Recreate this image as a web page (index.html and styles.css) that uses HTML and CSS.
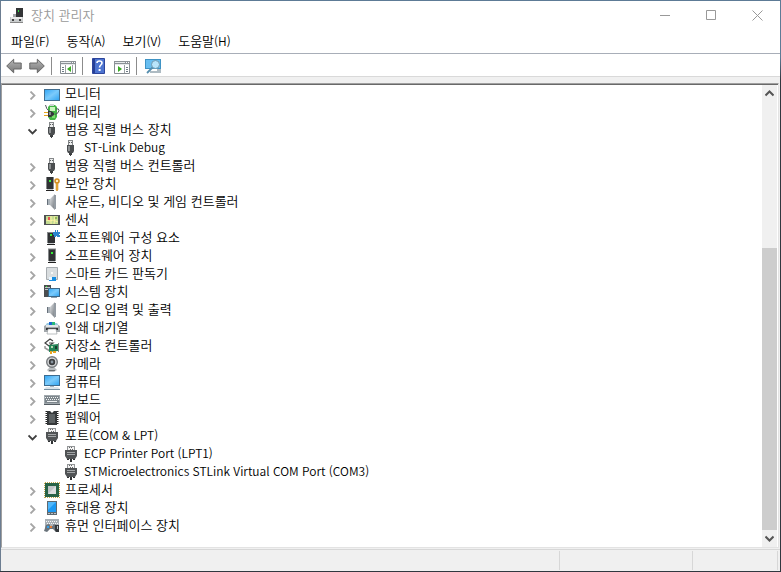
FILE: index.html
```html
<!DOCTYPE html>
<html lang="ko">
<head>
    <meta charset="UTF-8">
    <meta name="viewport" content="width=device-width, initial-scale=1.0">
    <title>장치 관리자</title>
    <link rel="stylesheet" href="styles.css">
</head>
<body>
    <!-- device icons, all on a 16x16 grid -->
    <svg class="sprite" aria-hidden="true">
        <defs>
            <linearGradient id="screen" x1="0" y1="0" x2="1" y2="1">
                <stop offset="0" stop-color="#35a8f5"/>
                <stop offset=".5" stop-color="#7ccbfb"/>
                <stop offset="1" stop-color="#33a6f2"/>
            </linearGradient>
            <linearGradient id="metal" x1="0" y1="0" x2="1" y2="1">
                <stop offset="0" stop-color="#e4e6e8"/>
                <stop offset="1" stop-color="#6c7278"/>
            </linearGradient>
            <linearGradient id="arrow" x1="0" y1="0" x2="0" y2="1">
                <stop offset="0" stop-color="#b5b5b5"/>
                <stop offset="1" stop-color="#777"/>
            </linearGradient>
        </defs>
        <symbol id="chevron" viewBox="0 0 9 9">
            <path d="M2.5 .5l4 4-4 4" fill="none" stroke="currentColor" stroke-width="1.8"/>
        </symbol>
        <symbol id="tower" viewBox="0 0 16 16">
            <path d="M4 1h8v12H4z" fill="#303234"/>
            <path d="M4 1h8M4.500 1v12M11.500 1v12" stroke="#85888a" fill="none"/>
            <path d="M7 4h2v2H7z" fill="#35ee35"/>
            <path d="M4 14h8v1H4z" fill="#222"/>
            <path d="M5 13h6v1H5z" fill="#c5c8ca"/>
        </symbol>
        <symbol id="monitor" viewBox="0 0 16 16">
            <path d="M0 3h16v12H0z" fill="#426e8f"/>
            <path d="M1 4h14v10H1z" fill="url(#screen)"/>
        </symbol>
        <symbol id="battery" viewBox="0 0 16 16">
            <path d="M6 1h5l2 2v10l-2 3H6l-2-3V3z" fill="#43b544"/>
            <path d="M6 3h5v4H6z" fill="#c9f5bd"/>
            <path d="M8 11h3v3H8z" fill="#7bdc6c"/>
            <path d="M6 0h4v2H6z" fill="#d0d3d5"/>
            <path d="M6 8Q2 5 1.500 1M12 5q3-1 3 1.500t-4 4" fill="none" stroke="#50565a"/>
            <path d="M0 8h5v1H0zM0 11h5v1H0z" fill="#e5a51d"/>
            <path d="M4 7h3l3 2v2l-3 2H4z" fill="#34383a"/>
            <path d="M5 8h2v3H5z" fill="#858b8e"/>
        </symbol>
        <symbol id="usb" viewBox="0 0 16 16">
            <path d="M5 0h5v5H5z" fill="#85888a"/>
            <path d="M6 1h3v4H6z" fill="#eceded"/>
            <path d="M6 2h1v1H6zM8 2h1v1H8z" fill="#5c6062"/>
            <path d="M4 5h7v6l-1 2H5l-1-2z" fill="#4b4e50"/>
            <path d="M5 6h2v5H5z" fill="#8b8e90"/>
            <path d="M6 13h3v2H6zM7 15h1v1H7z" fill="#3d4042"/>
        </symbol>
        <symbol id="security" viewBox="0 0 16 16">
            <path d="M2 1h8v12H2z" fill="#303234"/>
            <path d="M2.500 1v12M9.500 1v12" stroke="#85888a"/>
            <path d="M5 4h2v2H5z" fill="#35ee35"/>
            <path d="M3 13h6v1H3z" fill="#c5c8ca"/>
            <path d="M2 14h8v1H2z" fill="#222"/>
            <circle cx="13" cy="5" r="2" fill="#fff0c4" stroke="#d28b1d" stroke-width="1.600"/>
            <path d="M12 7h2v7l-1 1-1-1z" fill="#edb13c" stroke="#c27d16" stroke-width=".5"/>
        </symbol>
        <symbol id="speaker" viewBox="0 0 16 16">
            <path d="M3 5h4v6H3z" fill="#66707a"/>
            <path d="M6 5l5-5v16l-5-5z" fill="url(#metal)"/>
            <path d="M4 5h2v6H4z" fill="#aab2b9"/>
            <path d="M10 1h2v14h-2z" fill="#959ca3"/>
        </symbol>
        <symbol id="sensor" viewBox="0 0 16 16">
            <path d="M0 3h16v10H0z" fill="#4e5153"/>
            <path d="M2 4h12v8H2z" fill="#c3dc92"/>
            <path d="M2 8l4 1 3-1 5 2M7 4v8M11 4l-1 8" fill="none" stroke="#fff1a3"/>
            <path d="M4 5h2v3H4z" fill="#e65350"/>
            <path d="M11 5h2v2h-2z" fill="#8eb656"/>
        </symbol>
        <symbol id="component" viewBox="0 0 16 16">
            <path d="M3 2h8v11H3z" fill="#303234"/>
            <path d="M3 2.500h7M3.500 2v11" stroke="#85888a"/>
            <path d="M6 4h2v2H6z" fill="#35ee35"/>
            <path d="M3 14h8v1H3z" fill="#222"/>
            <path d="M4 13h6v1H4z" fill="#c5c8ca"/>
            <path d="M9 2h2V0h1v2h1V0h1v2h2v2h-1v1h1v2h-3V6h-1v1h-2V5H9z" fill="#2985ce"/>
        </symbol>
        <symbol id="smartcard" viewBox="0 0 16 16">
            <path d="M2.500 1.500h11v12h-11z" fill="#d9dddf" stroke="#a7acb0"/>
            <path d="M7 6h2v2H7z" fill="#f8f8f8"/>
            <path d="M5 11h7v4H5z" fill="#168de2"/>
            <path d="M5 11h3v3H5z" fill="#e9f5ff"/>
        </symbol>
        <symbol id="system" viewBox="0 0 16 16">
            <path d="M0 1h7v12H0z" fill="#4b4e50"/>
            <path d="M1 3.500h5M1 5.500h3" stroke="#bfc4c7"/>
            <path d="M2 2h1v1H2z" fill="#3e3"/>
            <path d="M4 4h12v9H4z" fill="#3c6888"/>
            <path d="M5 5h10v7H5z" fill="url(#screen)"/>
            <path d="M7 13h6v1H7z" fill="#8ea1ad"/>
        </symbol>
        <symbol id="printer" viewBox="0 0 16 16">
            <path d="M3 3h10l2 3H1z" fill="#9ccbe0"/>
            <path d="M5 2h3v3H5z" fill="#1b65d0"/>
            <path d="M8 2h3v3H8z" fill="#27b878"/>
            <path d="M0 6l2-1h12l2 1v6H0z" fill="#a2a7ab"/>
            <path d="M2 5h12v2H2z" fill="#e1e4e6"/>
            <path d="M2 8h12v2H2z" fill="#303234"/>
            <path d="M4 9h8l1 5H3z" fill="#fff" stroke="#8d9397" stroke-width=".6"/>
        </symbol>
        <symbol id="storage" viewBox="0 0 16 16">
            <path d="M9 3L6 1 1 5l4 3 4-3H5" fill="none" stroke="#444" stroke-width="1.200"/>
            <path d="M1 8v2l5 3" fill="none" stroke="#999" stroke-width="1.500"/>
            <path d="M5 7l9-1v7l-9 1z" fill="#258457"/>
            <path d="M7 8h2v2H7z" fill="#b5d8b1"/>
            <path d="M11 8h2v3h-2z" fill="#163d2c"/>
            <path d="M6 13h2v3H6zM9 13h3v2H9z" fill="#e9a621"/>
            <path d="M14.500 5v9" stroke="#888"/>
        </symbol>
        <symbol id="camera" viewBox="0 0 16 16">
            <path d="M3 14l3-3h4l3 3-3 2H5z" fill="#b9bdc0"/>
            <circle cx="8" cy="6" r="5.300" fill="#d6d8da" stroke="#777b7e" stroke-width="1.400"/>
            <circle cx="8" cy="6" r="3.200" fill="#3b3d3f"/>
            <circle cx="8" cy="6" r="1.400" fill="#8996a1"/>
            <path d="M5 14h6v1H5z" fill="#696d70"/>
        </symbol>
        <symbol id="computer" viewBox="0 0 16 16">
            <path d="M0 1h16v11H0z" fill="#3c6c91"/>
            <path d="M1 2h14v9H1z" fill="url(#screen)"/>
            <path d="M6 12h4v1H6z" fill="#acb6bd"/>
            <path d="M2 13h12l2 2H0z" fill="#dbe5eb"/>
            <path d="M0 15.500h16" stroke="#7892a3"/>
        </symbol>
        <symbol id="keyboard" viewBox="0 0 16 16">
            <path d="M0 3h16v10H0z" fill="#a0a8ad"/>
            <path d="M1 4h14v7H1z" fill="#7d868c"/>
            <path d="M1 5.500h14M2 7.500h13" stroke="#f1f4f5" stroke-dasharray="1 1"/>
            <path d="M3 9.500h10" stroke="#eef1f2"/>
            <path d="M0 12h16v1H0z" fill="#555d63"/>
        </symbol>
        <symbol id="firmware" viewBox="0 0 16 16">
            <path d="M2.500 1v14M13.500 1v14" stroke="#222" stroke-width="2" stroke-dasharray="1 1"/>
            <path d="M3 1h3l2 2 2-2h3v14H3z" fill="#35383a"/>
            <path d="M5 4h6v9H5z" fill="#5c6163"/>
        </symbol>
        <symbol id="port" viewBox="0 0 16 16">
            <path d="M4 0h8v5H4z" fill="#929597"/>
            <path d="M5 1h6v4H5z" fill="#f3f3f3"/>
            <path d="M6 1h1v1H6zM8 1h1v1H8zM7 3h1v1H7zM9 3h1v1H9z" fill="#666"/>
            <path d="M2 4h12v6l-2 3H4l-2-3z" fill="#505355"/>
            <path d="M4 6.500h8M4 8.500h8" stroke="#a2a5a7"/>
            <path d="M4 13h2v1H4zM10 13h2v1h-2zM7 13h2v3H7z" fill="#303234"/>
        </symbol>
        <symbol id="processor" viewBox="0 0 16 16">
            <path d="M1 .5h15M1 15.500h15M.5 1v15M15.500 1v15" stroke="#c5a54d" stroke-dasharray="1 1"/>
            <path d="M1 1h14v14H1z" fill="#286347"/>
            <path d="M4 4h8v8H4z" fill="#c1c5c7"/>
            <path d="M4 12l8-8v8z" fill="#dddfe0"/>
        </symbol>
        <symbol id="portable" viewBox="0 0 16 16">
            <path d="M3 1h10v14H3z" fill="#5d6971"/>
            <path d="M4 2h8v10H4z" fill="#1c99f3"/>
            <path d="M4 2h8l-8 8z" fill="#51b7fa"/>
            <path d="M4 13h2v1H4zM7 13h2v1H7zM10 13h2v1h-2z" fill="#bac1c5"/>
        </symbol>
        <symbol id="hid" viewBox="0 0 16 16">
            <path d="M1 1h14v9H1z" fill="#aab1b6"/>
            <path d="M2 3.500h12M3 5.500h11M2 7.500h12" stroke="#f6f7f8" stroke-dasharray="1 1"/>
            <path d="M2 7l3-1 2 2h1l2-2 2 1 2 6-2 1-3-3H6l-3 3-3-1z" fill="#69737b"/>
            <path d="M3 8h2v2H3z" fill="#36a0e8"/>
            <path d="M6 8h2v2H6z" fill="#e27b37"/>
            <path d="M11 7h4v7h-3l-1-2z" fill="#34383b"/>
            <path d="M13 8h1v3h-1z" fill="#b8bec2"/>
        </symbol>
        <symbol id="devmgr" viewBox="0 0 16 16">
            <path d="M7 0h7v10H7z" fill="#333537"/>
            <path d="M9 2h1v2H9z" fill="#30df40"/>
            <path d="M4 6h3v3H4z" fill="#a5a8aa"/>
            <path d="M1 9h13v6H1z" fill="#c9cccd"/>
            <path d="M2 9h11v2H2z" fill="#ececec"/>
            <path d="M3 11h2v2H3zM10 11h2v2h-2z" fill="#444"/>
            <path d="M1 14h13v1H1z" fill="#888"/>
        </symbol>
        <symbol id="arrow-left" viewBox="0 0 16 16">
            <path d="M.7 8l7-6.800V5h7.500v6H7.700v3.800z" fill="url(#arrow)" stroke="#666"/>
        </symbol>
        <symbol id="arrow-right" viewBox="0 0 16 16">
            <path d="M15.300 8l-7-6.800V5H.8v6h7.500v3.800z" fill="url(#arrow)" stroke="#666"/>
        </symbol>
        <symbol id="pane-left" viewBox="0 0 16 16">
            <path d="M.5 3.500h15v12H.5z" fill="#fff" stroke="#858b90"/>
            <path d="M0 3h16v4H0z" fill="#8c9297"/>
            <path d="M1 4.500h10M1 6.500h14" stroke="#e5e8ea"/>
            <path d="M12 4h1v1h-1zM14 4h1v1h-1z" fill="#fff"/>
            <path d="M5.500 7v8M12.500 7v8" stroke="#9ba1a5"/>
            <path d="M2 9.500h2M2 11.500h2M2 13.500h2" stroke="#6d7b85"/>
            <path d="M11 8v6l-4-3z" fill="#3aac25"/>
        </symbol>
        <symbol id="pane-right" viewBox="0 0 16 16">
            <path d="M.5 3.500h15v12H.5z" fill="#fff" stroke="#858b90"/>
            <path d="M0 3h16v4H0z" fill="#8c9297"/>
            <path d="M1 4.500h10M1 6.500h14" stroke="#e5e8ea"/>
            <path d="M12 4h1v1h-1zM14 4h1v1h-1z" fill="#fff"/>
            <path d="M10.500 7v8" stroke="#9ba1a5"/>
            <path d="M12 9.500h2M12 11.500h2M12 13.500h2" stroke="#6d7b85"/>
            <path d="M4 8v6l4-3z" fill="#3aac25"/>
        </symbol>
        <symbol id="help" viewBox="0 0 16 16">
            <path d="M1.500 .5h12v15h-12z" fill="#4d74d0" stroke="#2d459c"/>
            <path d="M2 1h2v14H2z" fill="#263f96"/>
            <path d="M6 5q0-2 2.500-2T11 5q0 1-1.200 2T8.500 9.500" fill="none" stroke="#fff" stroke-width="1.600"/>
            <path d="M7.600 11h2v2h-2z" fill="#fff"/>
        </symbol>
        <symbol id="scan" viewBox="0 0 16 16">
            <path d="M0 1h16v10H0z" fill="#3f93c5"/>
            <path d="M1 2h14v8H1z" fill="#68bef1"/>
            <path d="M5 13h11v2H5zM12 11h4v2h-4z" fill="#aebbc3"/>
            <circle cx="10.500" cy="6.500" r="4" fill="#b8e4fb" stroke="#6e98b0"/>
            <path d="M7.500 9.500L2 15" stroke="#568eae" stroke-width="1.800"/>
        </symbol>
    </svg>

    <main class="window">
        <header class="title-bar">
            <svg class="icon"><use href="#devmgr"/></svg>
            <h1>장치 관리자</h1>
            <div class="window-controls">
                <button type="button" aria-label="최소화"><svg viewBox="0 0 11 11"><path d="M0 5.500h10"/></svg></button>
                <button type="button" aria-label="최대화"><svg viewBox="0 0 11 11"><path d="M.5 .5h9v9h-9z"/></svg></button>
                <button type="button" aria-label="닫기"><svg viewBox="0 0 11 11"><path d="M.5 .5l10 10M10.500 .5l-10 10"/></svg></button>
            </div>
        </header>

        <nav class="menu-bar">
            <button type="button">파일<span class="latin">(F)</span></button>
            <button type="button">동작<span class="latin">(A)</span></button>
            <button type="button">보기<span class="latin">(V)</span></button>
            <button type="button">도움말<span class="latin">(H)</span></button>
        </nav>

        <div class="toolbar">
            <button type="button" aria-label="뒤로"><svg class="icon"><use href="#arrow-left"/></svg></button>
            <button type="button" aria-label="앞으로"><svg class="icon"><use href="#arrow-right"/></svg></button>
            <span class="separator"></span>
            <button type="button" aria-label="콘솔 트리 표시"><svg class="icon"><use href="#pane-left"/></svg></button>
            <span class="separator"></span>
            <button type="button" aria-label="도움말"><svg class="icon"><use href="#help"/></svg></button>
            <button type="button" aria-label="작업 창 표시"><svg class="icon"><use href="#pane-right"/></svg></button>
            <span class="separator"></span>
            <button type="button" aria-label="하드웨어 변경 사항 검색"><svg class="icon"><use href="#scan"/></svg></button>
        </div>

        <section class="panel">
            <ul class="tree" id="device-tree"></ul>
            <div class="scrollbar">
                <button type="button" aria-label="위로 스크롤"><svg viewBox="0 0 9 9"><path d="M.5 6.500l4-4 4 4"/></svg></button>
                <div class="track"><div class="thumb"></div></div>
                <button type="button" aria-label="아래로 스크롤"><svg viewBox="0 0 9 9"><path d="M.5 2.500l4 4 4-4"/></svg></button>
            </div>
        </section>

        <footer class="status-bar">
            <span class="status-main"></span>
            <span class="status-middle"></span>
            <span class="status-end"></span>
        </footer>
    </main>

    <script src="script.js"></script>
</body>
</html>
```

FILE: styles.css
```css
* {
    box-sizing: border-box;
}

body {
    margin: 0;
    height: 100vh;
    padding: 1px;
    background: linear-gradient(#5d7b96 10%, #30373f 14%);
    font-family: "Noto Sans CJK KR", "Noto Sans", sans-serif;
    font-size: 13px;
    font-weight: 350;
    line-height: 18px;
    color: #000;
}

button {
    display: flex;
    align-items: center;
    justify-content: center;
    padding: 0;
    border: 0;
    background: none;
    color: inherit;
    font: inherit;
}

.latin {
    font-size: 12px;
}

.sprite {
    position: absolute;
    width: 0;
    height: 0;
}

.icon {
    display: block;
    flex: none;
    width: 16px;
    height: 16px;
}

.window {
    display: flex;
    flex-direction: column;
    height: 100%;
    background: #f0f0f0;
    box-shadow: -1px 0 #6c7d91;
}

.title-bar {
    display: flex;
    align-items: center;
    height: 29px;
    padding-left: 8px;
    background: #fff;
    color: #999;
}

.title-bar h1 {
    flex: 1;
    margin: 0;
    padding: 0 0 2px 6px;
    font-size: 13px;
    font-weight: inherit;
}

.window-controls {
    display: flex;
    height: 100%;
}

.window-controls button {
    width: 46px;
}

.window-controls svg {
    width: 11px;
    height: 11px;
    fill: none;
    stroke: #999;
}

.menu-bar {
    display: flex;
    gap: 17px;
    height: 24px;
    padding: 0 0 2px 10px;
    border-bottom: 1px solid #a8aeb8;
    background: #fff;
}

.toolbar {
    display: flex;
    align-items: center;
    gap: 7px;
    height: 23px;
    padding: 2px 0 0 5px;
    border-bottom: 1px solid #d9d9d9;
    background: #fff;
}

.separator {
    width: 1px;
    height: 18px;
    margin: 0 1px 0 -1px;
    background: #8c8c8c;
}

.panel {
    display: flex;
    flex: 1;
    min-height: 0;
    margin: 6px 1px 0 0;
    border: 1px solid #e3e3e3;
    border-top-color: #a0a0a0;
    border-left-color: #a0a0a0;
    background: #fff;
    box-shadow: inset 0 1px #696969;
}

.tree {
    flex: 1;
    margin: 0;
    padding: 1px 0 0 26px;
    overflow: hidden;
    list-style: none;
}

.tree ul {
    margin: 0;
    padding-left: 19px;
    list-style: none;
}

.row {
    display: flex;
    align-items: center;
    height: 18px;
    white-space: nowrap;
}

.toggle {
    width: 9px;
    height: 18px;
    margin-right: 7px;
    padding-top: 3px;
    color: #a6a6a6;
}

.toggle svg {
    width: 9px;
    height: 9px;
}

.toggle.open {
    color: #404040;
}

.toggle.open svg {
    transform: rotate(90deg);
}

.tree ul .row {
    padding-left: 16px;
}

.label {
    padding: 0 0 2px 5px;
}

.scrollbar {
    display: flex;
    flex-direction: column;
    width: 16px;
    margin: 1px 0 0;
    border-right: 1px solid #fff;
    background: #f0f0f0;
}

.scrollbar button {
    height: 17px;
}

.scrollbar svg {
    width: 9px;
    height: 9px;
    fill: none;
    stroke: #555;
    stroke-width: 2;
}

.track {
    display: flex;
    flex: 1;
    flex-direction: column;
    justify-content: flex-end;
}

.thumb {
    height: 66%;
    background: #cdcdcd;
}

.status-bar {
    display: flex;
    height: 22px;
    margin-top: 1px;
    padding: 1px 2px 1px 0;
    border-top: 1px solid #d7d7d7;
}

.status-bar span {
    border-right: 1px solid #d7d7d7;
}

.status-main {
    flex: 1;
}

.status-middle {
    width: 133px;
}

.status-end {
    width: 85px;
}
```

FILE: script.js
```js
const devices = [
    { name: "모니터", icon: "monitor" },
    { name: "배터리", icon: "battery" },
    { name: "범용 직렬 버스 장치", icon: "usb", children: ["ST-Link Debug"] },
    { name: "범용 직렬 버스 컨트롤러", icon: "usb" },
    { name: "보안 장치", icon: "security" },
    { name: "사운드, 비디오 및 게임 컨트롤러", icon: "speaker" },
    { name: "센서", icon: "sensor" },
    { name: "소프트웨어 구성 요소", icon: "component" },
    { name: "소프트웨어 장치", icon: "tower" },
    { name: "스마트 카드 판독기", icon: "smartcard" },
    { name: "시스템 장치", icon: "system" },
    { name: "오디오 입력 및 출력", icon: "speaker" },
    { name: "인쇄 대기열", icon: "printer" },
    { name: "저장소 컨트롤러", icon: "storage" },
    { name: "카메라", icon: "camera" },
    { name: "컴퓨터", icon: "computer" },
    { name: "키보드", icon: "keyboard" },
    { name: "펌웨어", icon: "firmware" },
    { name: "포트", latin: "(COM & LPT)", icon: "port", children: [
        "ECP Printer Port (LPT1)",
        "STMicroelectronics STLink Virtual COM Port (COM3)"
    ] },
    { name: "프로세서", icon: "processor" },
    { name: "휴대용 장치", icon: "portable" },
    { name: "휴먼 인터페이스 장치", icon: "hid" }
];

function createRow(name, latin, icon) {
    const row = document.createElement("div");
    row.className = "row";
    row.innerHTML = `<svg class="icon"><use href="#${icon}"/></svg><span class="label"></span>`;

    const label = row.querySelector(".label");
    label.textContent = name;
    if (latin) {
        const part = document.createElement("span");
        part.className = "latin";
        part.textContent = latin;
        label.append(part);
    }
    return row;
}

const tree = document.getElementById("device-tree");

devices.forEach((device) => {
    const item = document.createElement("li");
    const row = createRow(device.name, device.latin, device.icon);
    const toggle = document.createElement("button");
    toggle.type = "button";
    toggle.className = device.children ? "toggle open" : "toggle";
    toggle.setAttribute("aria-label", device.name);
    toggle.innerHTML = '<svg><use href="#chevron"/></svg>';
    row.prepend(toggle);
    item.append(row);

    if (device.children) {
        const list = document.createElement("ul");
        device.children.forEach((name) => {
            const child = document.createElement("li");
            child.append(createRow("", name, device.icon));
            list.append(child);
        });
        item.append(list);
        toggle.addEventListener("click", () => {
            list.hidden = !list.hidden;
            toggle.classList.toggle("open");
        });
    }
    tree.append(item);
});
```
